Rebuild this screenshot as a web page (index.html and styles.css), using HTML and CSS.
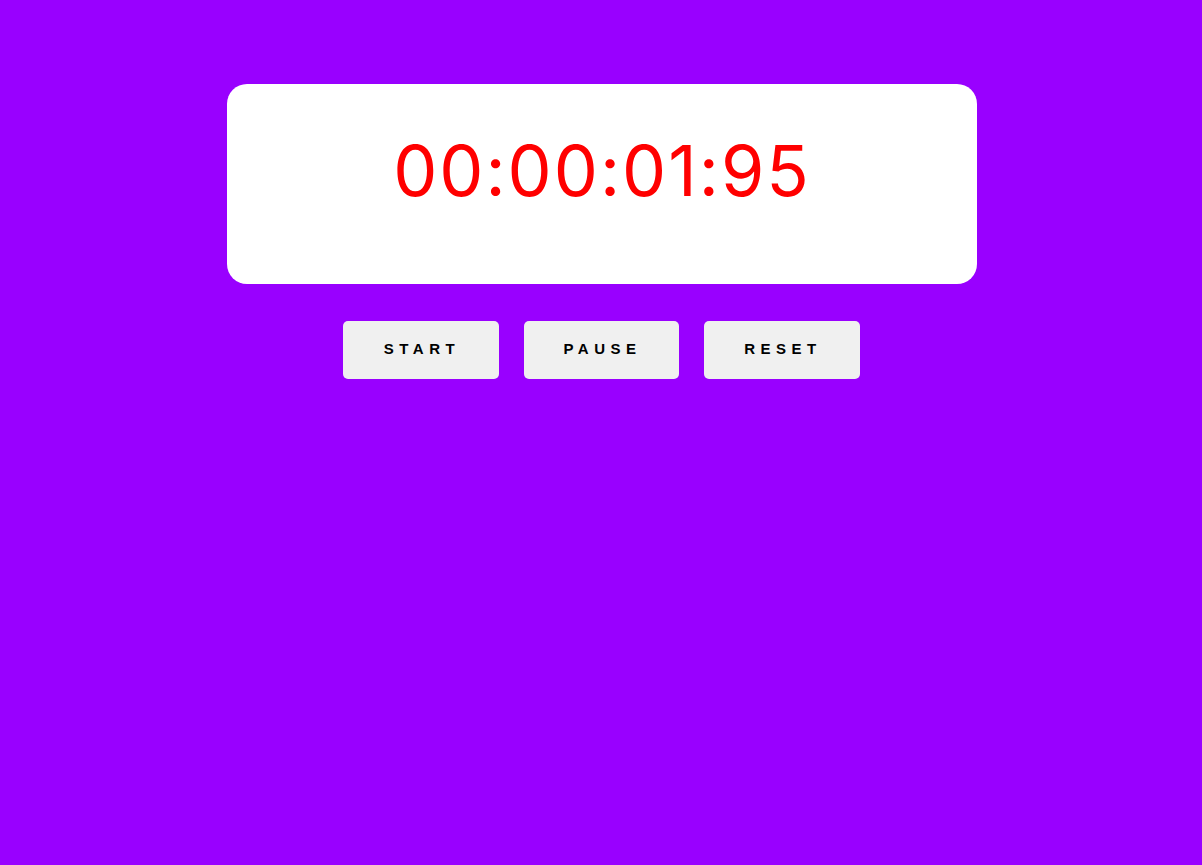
FILE: index.html
```html
<!DOCTYPE html>
<html>
<head>
<meta charset="utf-8">
<link rel="stylesheet" href="styles.css">
</head>
<body>
<div class="app">
  <div class="display">
    <div class="time">00:00:01:95</div>
  </div>
  <div class="controls">
    <button class="btn">START</button>
    <button class="btn">PAUSE</button>
    <button class="btn">RESET</button>
  </div>
</div>
</body>
</html>
```
FILE: styles.css
```css
html, body {
  margin: 0;
  padding: 0;
  background: #9900ff;
  height: 100%;
}
.app {
  display: flex;
  flex-direction: column;
  align-items: center;
  padding-top: 84px;
  padding-left: 2px;
}
.display {
  width: 750px;
  height: 200px;
  box-sizing: border-box;
  background: #ffffff;
  border-radius: 20px;
  display: flex;
  justify-content: center;
  padding-top: 37px;
}
.time {
  font-family: Inter, "Noto Sans", sans-serif;
  font-size: 70px;
  line-height: 100px;
  color: #ff0000;
  letter-spacing: 2px;
}
.controls {
  display: flex;
  gap: 25px;
  margin-top: 37px;
  margin-right: 1px;
}
.btn {
  width: 155.5px;
  height: 58px;
  border: none;
  border-radius: 5px;
  background: #f0f0f0;
  font-family: "Liberation Sans", Arial, sans-serif;
  font-weight: bold;
  font-size: 15px;
  letter-spacing: 5.5px;
  padding: 0 0 3px 2px;
  color: #000;
}
```
